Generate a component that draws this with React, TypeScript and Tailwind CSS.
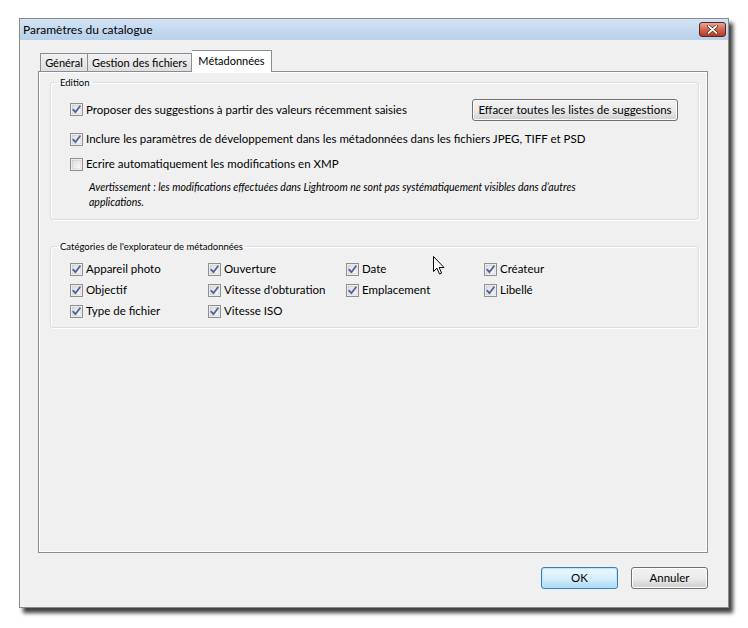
import type { ReactNode } from 'react';

const FONT = { fontFamily: 'Lato, "Open Sans", sans-serif' };

function Case({ coche = true }: { coche?: boolean }) {
  return (
    <svg width="13" height="13" viewBox="0 0 13 13" className="shrink-0">
      <defs>
        <linearGradient id="fondCase" x1="0" y1="0" x2="1" y2="1">
          <stop offset="0" stopColor="#dcdcdc" />
          <stop offset="1" stopColor="#fbfbfb" />
        </linearGradient>
      </defs>
      <rect x="0.5" y="0.5" width="12" height="12" fill="#fff" stroke="#8e8f8f" />
      <rect x="2" y="2" width="9" height="9" fill="url(#fondCase)" stroke="#bcbcbc" strokeWidth="0.6" />
      {coche && (
        <path d="M3.2 6.6 L5.4 9.2 L9.9 3.2" fill="none" stroke="#4d61a0" strokeWidth="1.8" strokeLinecap="round" strokeLinejoin="round" />
      )}
    </svg>
  );
}

function Option({ label, coche = true, className = '' }: { label: string; coche?: boolean; className?: string }) {
  return (
    <label className={`flex items-center gap-[3px] text-[11.5px] text-black leading-none whitespace-nowrap ${className}`}>
      <Case coche={coche} />
      <span>{label}</span>
    </label>
  );
}

function Groupe({ titre, children, className = '' }: { titre: string; children: ReactNode; className?: string }) {
  return (
    <fieldset className={`border border-[#d5dfe5] rounded-[3px] shadow-[inset_1px_1px_0_#fff,1px_1px_0_#fff] ${className}`}>
      <legend className="-ml-[13px] px-[3px] text-[9.5px] text-black leading-none">{titre}</legend>
      {children}
    </fieldset>
  );
}

function BoutonVista({ children, defaut = false, className = '' }: { children: ReactNode; defaut?: boolean; className?: string }) {
  return (
    <button
      className={`h-[22px] rounded-[3px] border text-[11.5px] text-black leading-none whitespace-nowrap ${
        defaut
          ? 'border-[#3c7fb1] bg-gradient-to-b from-[#eaf6fd] via-[#d9f0fc] to-[#a7d9f5] shadow-[inset_0_0_0_1px_#b9e3f8]'
          : 'border-[#707070] bg-gradient-to-b from-[#f2f2f2] via-[#ebebeb] to-[#cfcfcf] shadow-[inset_0_0_0_1px_#fcfcfc]'
      } ${className}`}
    >
      {children}
    </button>
  );
}

export default function App() {
  return (
    <div className="w-[748px] h-[628px] bg-white pt-[18px] pl-[19px] relative" style={FONT}>
      <div className="w-[710px] h-[590px] flex flex-col border border-[#8a8a8a] shadow-[4px_5px_4px_rgba(0,0,0,0.75)] bg-[#f0f0f0]">
        {/* barre de titre */}
        <div className="h-[21px] flex items-center justify-between pl-[3px] pr-[2px] bg-gradient-to-b from-[#d3e3f5] to-[#b8d0ea]">
          <span className="text-[12px] text-black leading-none">Paramètres du catalogue</span>
          <div className="w-[27px] h-[15px] rounded-[3px] border border-[#5e2219] bg-gradient-to-b from-[#e7a797] via-[#d2664f] to-[#b23a24] flex items-center justify-center">
            <svg width="11" height="9" viewBox="0 0 11 9">
              <path d="M1.5 1 L9.5 8 M9.5 1 L1.5 8" stroke="#3b1510" strokeWidth="3" strokeLinecap="round" />
              <path d="M1.5 1 L9.5 8 M9.5 1 L1.5 8" stroke="#fff" strokeWidth="1.8" strokeLinecap="round" />
            </svg>
          </div>
        </div>

        <div className="flex-1 flex flex-col pt-[10px] pl-[18px] pr-[20px]">
          {/* onglets */}
          <div className="flex items-end pl-[2px] h-[21px] text-[11px] leading-none">
            <div className="w-[48px] h-[18px] flex items-center justify-center border border-b-0 border-[#898c95] bg-gradient-to-b from-[#f2f2f2] to-[#dedede]">Général</div>
            <div className="w-[104px] h-[18px] flex items-center justify-center border border-b-0 border-l-0 border-[#898c95] bg-gradient-to-b from-[#f2f2f2] to-[#dedede]">Gestion des fichiers</div>
            <div className="w-[80px] h-[22px] -mb-px relative z-10 flex items-center justify-center border border-b-0 border-l-0 border-[#898c95] bg-white pb-[3px]">Métadonnées</div>
          </div>

          {/* panneau */}
          <div className="h-[482px] border border-[#898c95] shadow-[inset_0_0_0_1px_#fff] pt-[6px] pl-[11px] pr-[8px]">
            <Groupe titre="Edition" className="h-[142px] pl-[19px] pr-[20px]">
              <div className="flex items-center justify-between mt-[11px]">
                <Option label="Proposer des suggestions à partir des valeurs récemment saisies" />
                <BoutonVista className="w-[206px]">Effacer toutes les listes de suggestions</BoutonVista>
              </div>
              <Option className="mt-[12px]" label="Inclure les paramètres de développement dans les métadonnées dans les fichiers JPEG, TIFF et PSD" />
              <Option className="mt-[12px]" coche={false} label="Ecrire automatiquement les modifications en XMP" />
              <p className="mt-[9px] ml-[19px] w-[500px] text-[10.5px] italic leading-[15px] text-black">
                Avertissement : les modifications effectuées dans Lightroom ne sont pas systématiquement visibles dans d’autres applications.
              </p>
            </Groupe>

            <Groupe titre="Catégories de l'explorateur de métadonnées" className="mt-[22px] h-[86px] pl-[19px]">
              <div className="grid grid-cols-[138px_138px_138px_138px] gap-y-[8px] mt-[11px]">
                <Option label="Appareil photo" />
                <Option label="Ouverture" />
                <Option label="Date" />
                <Option label="Créateur" />
                <Option label="Objectif" />
                <Option label="Vitesse d'obturation" />
                <Option label="Emplacement" />
                <Option label="Libellé" />
                <Option label="Type de fichier" />
                <Option label="Vitesse ISO" />
              </div>
            </Groupe>
          </div>

          {/* boutons */}
          <div className="flex justify-end gap-[13px] mt-[14px]">
            <BoutonVista defaut className="w-[77px]">OK</BoutonVista>
            <BoutonVista className="w-[77px]">Annuler</BoutonVista>
          </div>
        </div>
      </div>

      {/* curseur */}
      <svg className="absolute left-[433px] top-[256px]" width="12" height="19" viewBox="0 0 12 19">
        <path d="M0.5 0.5 L0.5 15.5 L4 12.2 L6.5 18 L8.6 17.1 L6.2 11.5 L11 11.5 Z" fill="#fff" stroke="#000" strokeWidth="1" strokeLinejoin="miter" />
      </svg>
    </div>
  );
}
